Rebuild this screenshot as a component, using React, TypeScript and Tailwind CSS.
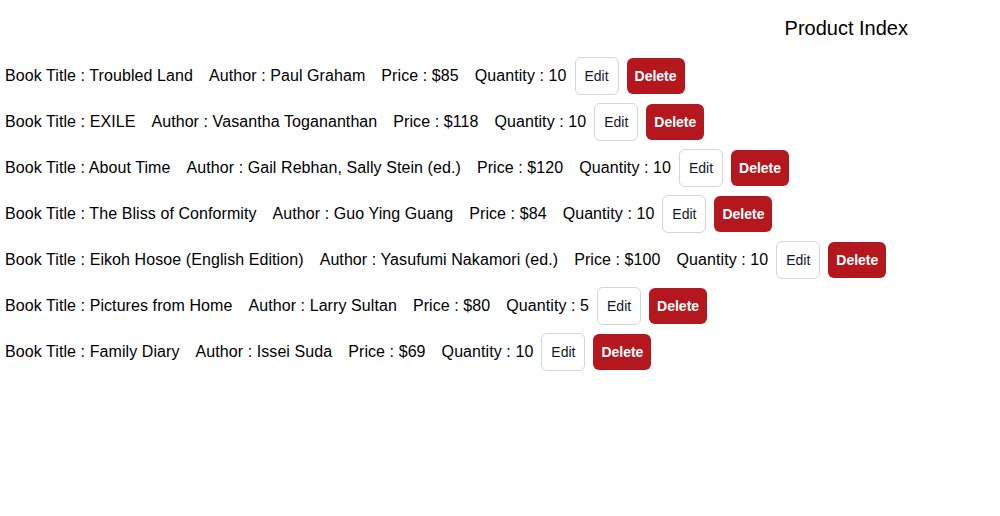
const books = [
  { title: "Troubled Land", author: "Paul Graham", price: 85, qty: 10 },
  { title: "EXILE", author: "Vasantha Togananthan", price: 118, qty: 10 },
  { title: "About Time", author: "Gail Rebhan, Sally Stein (ed.)", price: 120, qty: 10 },
  { title: "The Bliss of Conformity", author: "Guo Ying Guang", price: 84, qty: 10 },
  { title: "Eikoh Hosoe (English Edition)", author: "Yasufumi Nakamori (ed.)", price: 100, qty: 10 },
  { title: "Pictures from Home", author: "Larry Sultan", price: 80, qty: 5 },
  { title: "Family Diary", author: "Issei Suda", price: 69, qty: 10 },
];

export default function App() {
  return (
    <div className="w-[1000px] h-[516px] bg-white text-black font-['Liberation_Sans',sans-serif]">
      <div className="flex justify-end pr-[92px] h-[53px] items-center">
        <h1 className="text-[20px] pt-[3px]">Product Index</h1>
      </div>
      <div className="flex flex-col">
        {books.map((b) => (
          <div key={b.title} className="flex items-center h-[46px] pl-[5px] text-[16px] tracking-[0.08px]">
            <span>Book Title : {b.title}</span>
            <span className="ml-4">Author : {b.author}</span>
            <span className="ml-4">Price : ${b.price}</span>
            <span className="ml-4">Quantity : {b.qty}</span>
            <button className="ml-2 h-[38px] w-[44px] flex items-center justify-center border border-gray-300 rounded-md text-sm font-medium text-gray-900 bg-white tracking-normal">
              Edit
            </button>
            <button className="ml-2 h-[36px] w-[58px] flex items-center justify-center rounded-md bg-[#b5171f] text-white text-sm font-bold tracking-normal">
              Delete
            </button>
          </div>
        ))}
      </div>
    </div>
  );
}
